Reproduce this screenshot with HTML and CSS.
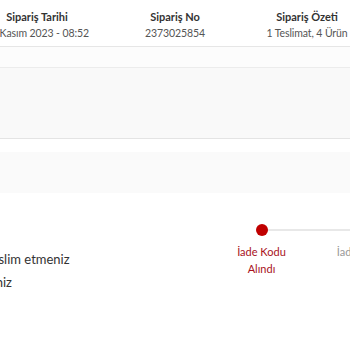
FILE: index.html
```html
<!DOCTYPE html>
<html lang="tr">
<head>
  <meta charset="UTF-8" />
  <title>Sipariş Detayı</title>
  <link rel="stylesheet" href="styles.css">
</head>
<body>
  <div class="order-head">
    <div class="col">
      <div class="label">Sipariş Tarihi</div>
      <div class="value">23 Kasım 2023 - 08:52</div>
    </div>
    <div class="col">
      <div class="label">Sipariş No</div>
      <div class="value">2373025854</div>
    </div>
    <div class="col">
      <div class="label">Sipariş Özeti</div>
      <div class="value">1 Teslimat, 4 Ürün</div>
    </div>
  </div>

  <div class="band-faint"></div>
  <div class="panel"></div>
  <div class="band-gap"></div>
  <div class="band-soft"></div>

  <div class="return-row">
    <div class="return-text">
      <p>Ürünü kargoya teslim etmeniz</p>
      <p class="tail">gerekmektedir. İletiniz</p>
    </div>
    <div class="steps">
      <div class="step active">
        <span class="dot"></span>
        <span class="step-label">İade Kodu<br>Alındı</span>
      </div>
      <div class="step">
        <span class="dot"></span>
        <span class="step-label">İade Kargoda</span>
      </div>
    </div>
  </div>
</body>
</html>
```

FILE: styles.css
```css
html, body { margin: 0; padding: 0; }
body {
  font-family: "Source Sans Pro", Lato, "Open Sans", sans-serif;
  background: #fff;
  color: #333;
  width: 350px;
  height: 350px;
  overflow: hidden;
}

.order-head {
  display: grid;
  grid-template-columns: 110px 110px 110px;
  column-gap: 28px;
  margin-left: -18px;
  padding-top: 10px;
  height: 47px;
  box-sizing: border-box;
  border-bottom: 1px solid #e6e6e6;
  text-align: center;
}
.order-head .col:nth-child(3) { margin-left: -12px; }
.label { font-size: 11px; font-weight: 700; color: #333; white-space: nowrap; }
.value { font-size: 10.5px; color: #555; margin-top: 4px; white-space: nowrap; letter-spacing: -0.1px; }

.band-faint { height: 20px; background: #fcfcfc; border-bottom: 1px solid #ececec; }
.panel { height: 70px; background: #f9f9f9; border-bottom: 1px solid #e4e4e4; }
.band-gap { height: 13px; }
.band-soft { height: 41px; background: #fafafa; }

.return-row {
  display: flex;
  margin-top: 31px;
}
.return-text {
  width: 268px;
  margin-left: -100px;
  flex-shrink: 0;
  padding-top: 27px;
}
.return-text p { margin: 0 0 6px; font-size: 13px; line-height: 17px; color: #333; white-space: nowrap; }
.return-text .tail {
  display: flex;
  justify-content: flex-end;
  width: 112px;
}

.steps { display: flex; margin-left: 40px; }
.step {
  width: 107px;
  display: flex;
  flex-direction: column;
  align-items: center;
  position: relative;
  flex-shrink: 0;
}
.step::after {
  content: "";
  position: absolute;
  top: 5px;
  left: 50%;
  width: 100%;
  height: 2px;
  background: #e8e8e8;
}
.dot {
  width: 12px;
  height: 12px;
  border-radius: 50%;
  background: #c00000;
  position: relative;
  z-index: 1;
}
.step:not(.active) .dot { background: transparent; }
.step-label {
  margin-top: 7px;
  font-size: 11px;
  line-height: 17px;
  text-align: center;
  color: #999;
  white-space: nowrap;
}
.step.active .step-label { color: #a8121b; }
```
